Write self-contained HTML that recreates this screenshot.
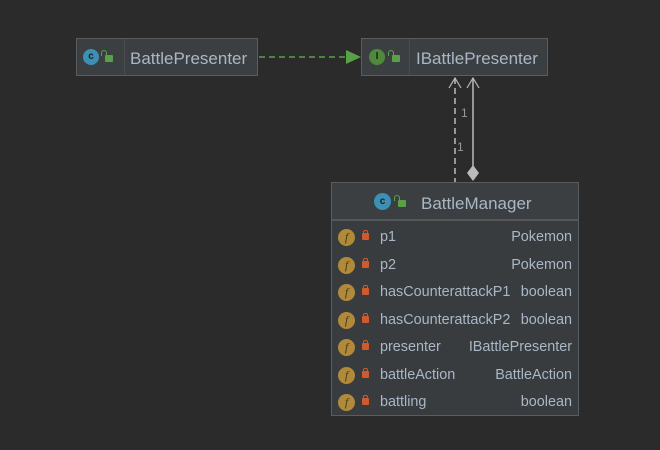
<!DOCTYPE html><html><head><style>
body{margin:0;width:660px;height:450px;background:#2b2b2b;position:relative;overflow:hidden;font-family:"Liberation Sans","DejaVu Sans",sans-serif}
.box{position:absolute;background:#3c3f41;border:1px solid #5a5d5f;box-sizing:border-box}
.t{position:absolute;color:#a9b7c6;font-size:17px}
.ic{position:absolute;width:16px;height:16px;border-radius:50%;color:#1e1e1e;font-size:10px;font-weight:bold;text-align:center;line-height:16px}
.lk{position:absolute;width:8px;height:7px;background:#59a146;border-radius:1px}
.lk:before{content:"";position:absolute;left:-4px;top:-5px;width:4px;height:5px;border:1.5px solid #59a146;border-bottom:none;border-radius:3px 3px 0 0}
.row{position:absolute;left:0;width:246px;height:27px;font-size:14.4px;color:#a9b7c6}
.row .f{position:absolute;left:6px;top:5px;width:17px;height:17px;border-radius:50%;background:#b08a3a;color:#4a3b1a;font-size:12px;text-align:center;line-height:17px;font-family:"Liberation Serif",serif;font-style:italic}
.row .pl{position:absolute;left:30px;top:9px;width:7px;height:7px;background:#d05a2e;border-radius:1px}
.row .pl:before{content:"";position:absolute;left:1px;top:-3px;width:3px;height:3px;border:1px solid #d05a2e;border-bottom:none;border-radius:2px 2px 0 0}
.row .n{position:absolute;left:48px;top:5px}
.row .ty{position:absolute;right:6px;top:5px}
</style></head><body>
<div class="box" style="left:76px;top:38px;width:182px;height:38px">
<div style="position:absolute;left:47px;top:0;width:1px;height:36px;background:#4a4d4f"></div>
<div class="ic" style="left:6px;top:10px;background:#3c90b5">c</div>
<div class="lk" style="left:28px;top:16px"></div>
<div class="t" style="left:53px;top:10px">BattlePresenter</div></div>
<div class="box" style="left:361px;top:38px;width:187px;height:38px">
<div style="position:absolute;left:47px;top:0;width:1px;height:36px;background:#4a4d4f"></div>
<div class="ic" style="left:7px;top:10px;background:#4f8a3a">I</div>
<div class="lk" style="left:30px;top:16px"></div>
<div class="t" style="left:54px;top:10px">IBattlePresenter</div></div>
<svg style="position:absolute;left:0;top:0" width="660" height="450">
<line x1="259" y1="57" x2="348" y2="57" stroke="#59a146" stroke-width="1.5" stroke-dasharray="6,4"/>
<polygon points="346,50 361,57 346,64" fill="#59a146"/>
<line x1="455" y1="78" x2="455" y2="182" stroke="#bbb" stroke-width="1.5" stroke-dasharray="6,4"/>
<polyline points="449,88 455,78 461,88" fill="none" stroke="#bbb" stroke-width="1.2"/>
<line x1="473" y1="78" x2="473" y2="166" stroke="#bbb" stroke-width="1.5"/>
<polyline points="467,88 473,78 479,88" fill="none" stroke="#bbb" stroke-width="1.2"/>
<polygon points="473,165 479,173 473,181 467,173" fill="#bbb"/>
<text x="461" y="117" fill="#999" font-size="12" font-family="Liberation Sans">1</text>
<text x="457" y="151" fill="#999" font-size="12" font-family="Liberation Sans">1</text>
</svg>
<div class="box" style="left:331px;top:182px;width:248px;height:234px;background:#393c3e">
<div style="position:absolute;left:0;top:0;width:246px;height:36px;background:#3c3f41;border-bottom:2px solid #55585a"></div>
<div class="ic" style="left:42px;top:10px;background:#3c90b5;width:17px;height:17px;line-height:17px">c</div>
<div class="lk" style="left:66px;top:17px"></div>
<div class="t" style="left:89px;top:11px">BattleManager</div>
<div class="row" style="top:41px"><div class="f">f</div><div class="pl"></div><div class="n">p1</div><div class="ty">Pokemon</div></div>
<div class="row" style="top:69px"><div class="f">f</div><div class="pl"></div><div class="n">p2</div><div class="ty">Pokemon</div></div>
<div class="row" style="top:96px"><div class="f">f</div><div class="pl"></div><div class="n">hasCounterattackP1</div><div class="ty">boolean</div></div>
<div class="row" style="top:124px"><div class="f">f</div><div class="pl"></div><div class="n">hasCounterattackP2</div><div class="ty">boolean</div></div>
<div class="row" style="top:151px"><div class="f">f</div><div class="pl"></div><div class="n">presenter</div><div class="ty">IBattlePresenter</div></div>
<div class="row" style="top:179px"><div class="f">f</div><div class="pl"></div><div class="n">battleAction</div><div class="ty">BattleAction</div></div>
<div class="row" style="top:206px"><div class="f">f</div><div class="pl"></div><div class="n">battling</div><div class="ty">boolean</div></div>
</div>
</body></html>
